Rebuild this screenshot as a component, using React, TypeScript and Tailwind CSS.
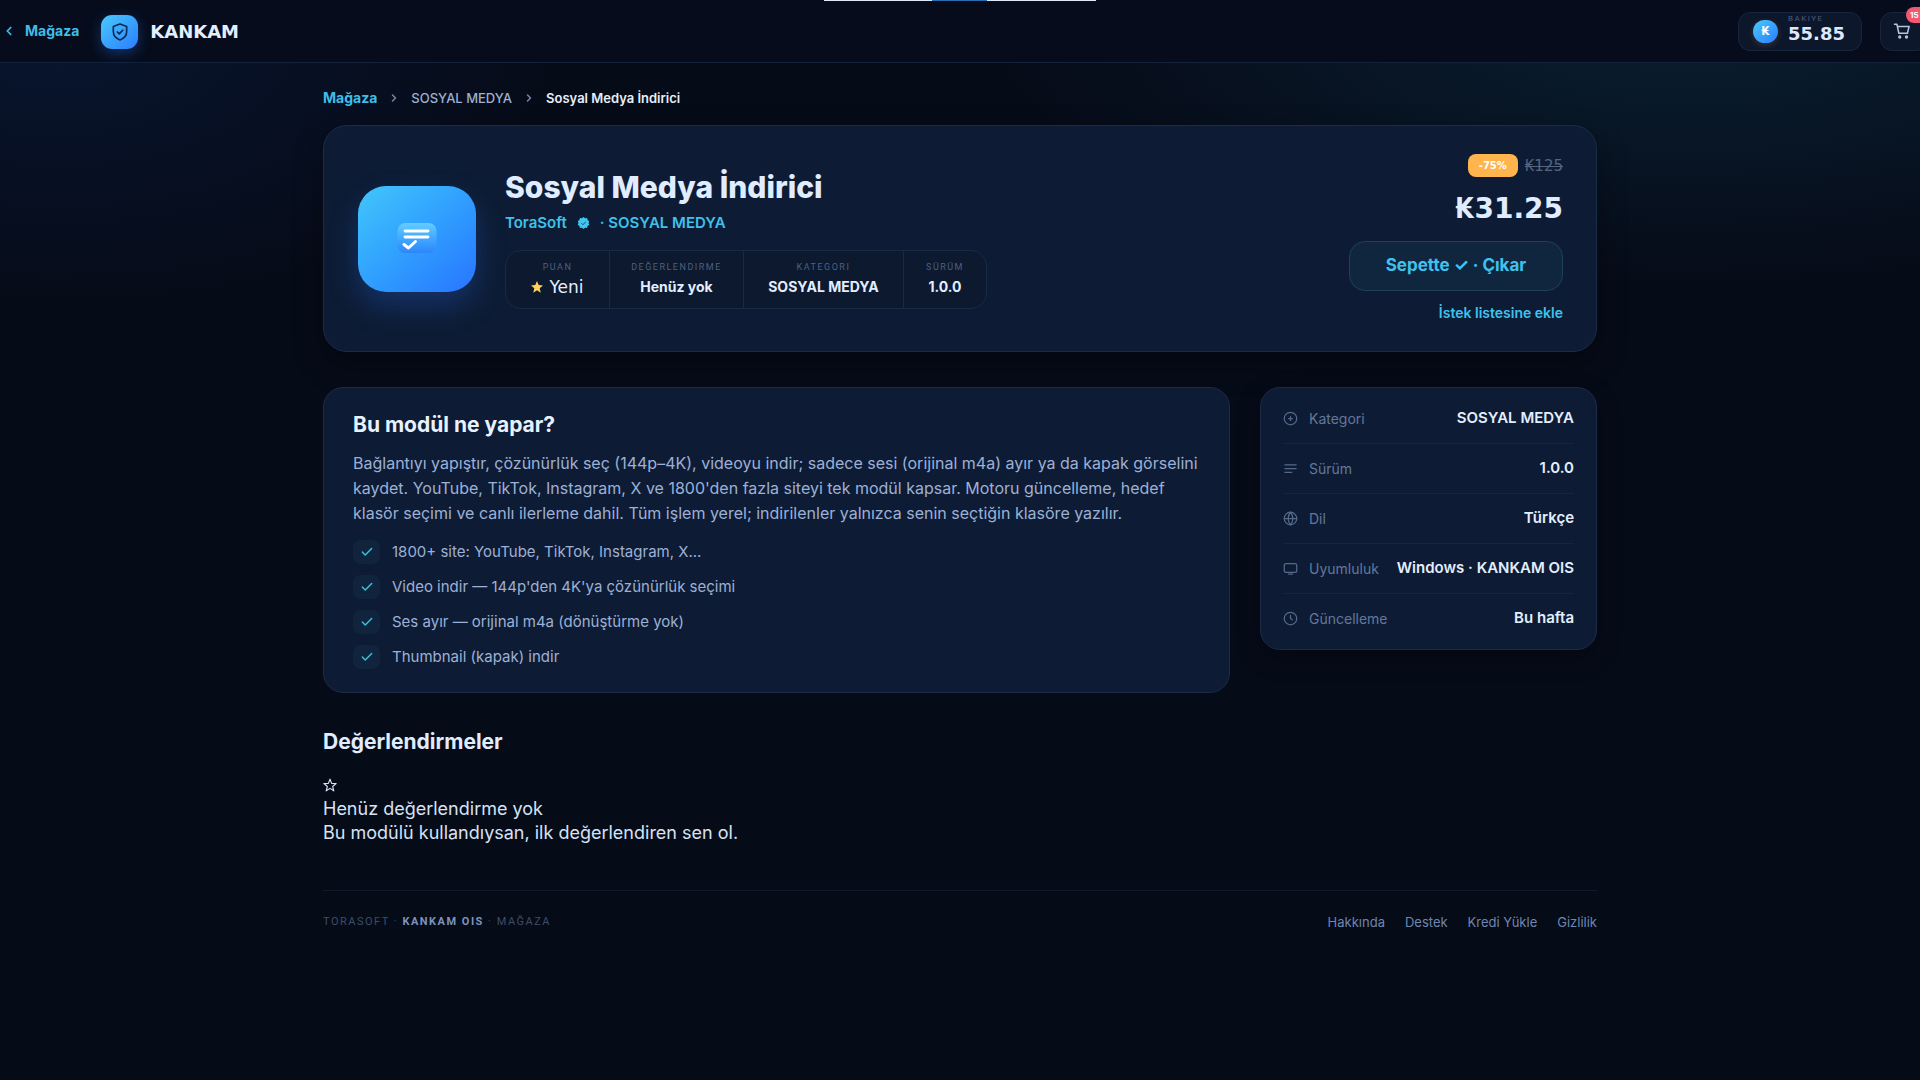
import React from "react";
import { Check, ChevronLeft, ChevronRight } from "lucide-react";

const display = "font-['DejaVu_Sans',sans-serif] font-bold";
const caption = "font-['Roboto',sans-serif] uppercase";

const stroke = {
  fill: "none",
  stroke: "currentColor",
  strokeWidth: 2,
  strokeLinecap: "round" as const,
  strokeLinejoin: "round" as const,
};

function ShieldLogo() {
  return (
    <span className="flex h-[34px] w-[37px] items-center justify-center rounded-[11px] bg-linear-to-br from-[#4cc9fb] to-[#2f7bff] shadow-[0_4px_14px_rgba(47,123,255,0.35)]">
      <svg viewBox="0 0 24 24" className="h-5 w-5 text-[#0b2a55]" {...stroke}>
        <path d="M12 2.5l8 3v6c0 5-3.3 8.400-8 10-4.700-1.600-8-5-8-10v-6z" />
        <path d="M8.800 12l2.300 2.300 4.200-4.400" />
      </svg>
    </span>
  );
}

function Header() {
  return (
    <header className="relative flex h-[63px] items-center justify-between border-b border-[#13213a] bg-[#060c1b]">
      <div className="absolute left-1/2 top-0 flex h-px w-[272px] -translate-x-1/2 bg-[#dfe8f5]">
        <div className="ml-[108px] w-[55px] bg-[#2a6cb0]" />
      </div>
      <div className="flex items-center gap-[22px] pl-0.5">
        <a href="#magaza" className="flex items-center gap-[9px] text-sm font-bold text-[#3fbde8]">
          <ChevronLeft size={14} strokeWidth={3} />
          Mağaza
        </a>
        <a href="#anasayfa" className="flex items-center gap-3 pt-0.5">
          <ShieldLogo />
          <span className={`${display} text-lg leading-6 text-[#e3eeff]`}>KANKAM</span>
        </a>
      </div>
      <div className="-mr-2 flex items-center gap-[18px]">
        <div className="flex h-[39px] w-[124px] items-center gap-2.5 rounded-xl border border-[#17263f] bg-[#0c172b] pl-3.5">
          <span className="flex h-[23px] w-[25px] items-center justify-center rounded-full bg-linear-to-br from-[#4cc9fb] to-[#2f7bff] font-['DejaVu_Sans'] text-xs font-bold text-white shadow-[0_2px_6px_rgba(255,160,70,0.2)]">
            ₭
          </span>
          <span className="flex flex-col pb-1">
            <span className={`${caption} text-[8px] leading-[10px] tracking-[1.5px] text-[#4c5c78]`}>BAKIYE</span>
            <span className={`${display} text-lg leading-5 text-[#dbe8ff]`}>55.85</span>
          </span>
        </div>
        <button
          type="button"
          aria-label="Sepet"
          className="relative flex h-[39px] w-[48px] items-center rounded-xl border border-[#17263f] bg-[#0c172b] pl-[11px] text-[#b7c6de]"
        >
          <svg viewBox="0 0 24 24" className="h-[18px] w-5" {...stroke}>
            <path d="M2 3h3.200l2.600 12h11.400l2.300-9H6" />
            <circle cx="9" cy="20" r="1.200" />
            <circle cx="18" cy="20" r="1.200" />
          </svg>
          <span className="absolute -top-1.5 left-[25px] flex h-4 w-6 items-center rounded-full bg-[#f4586f] pl-1 text-[8px] font-bold text-white">
            15
          </span>
        </button>
      </div>
    </header>
  );
}

function Breadcrumb() {
  return (
    <nav aria-label="Sayfa yolu" className="flex h-[18px] items-center gap-[11px] text-[13px] leading-[18px]">
      <a href="#magaza" className="text-sm font-bold text-[#3fbde8]">
        Mağaza
      </a>
      <ChevronRight size={12} className="text-[#7686a3]" strokeWidth={3} />
      <a href="#sosyal-medya" className="font-medium text-[#9fb1d0]">
        SOSYAL MEDYA
      </a>
      <ChevronRight size={12} className="text-[#7686a3]" strokeWidth={3} />
      <span className="font-semibold text-[#e6effc]">Sosyal Medya İndirici</span>
    </nav>
  );
}

function AppIcon() {
  return (
    <div className="flex h-[106px] w-[118px] shrink-0 items-center justify-center rounded-[28px] bg-linear-to-br from-[#43c6fb] to-[#2a74ff] shadow-[0_14px_30px_rgba(42,116,255,0.25)]">
      <svg viewBox="0 0 40 34" className="h-[34px] w-10" fill="none">
        <defs>
          <linearGradient id="sheet" x1="0" y1="0" x2="0" y2="1">
            <stop offset="0" stopColor="#62cdff" />
            <stop offset="0.600" stopColor="#3fa2ff" />
            <stop offset="1" stopColor="#2d86fb" />
          </linearGradient>
        </defs>
        <rect x="0.500" y="1" width="39" height="30" rx="8" fill="url(#sheet)" />
        <path d="M8 9h23M8 15h23" stroke="#fff" strokeWidth="2.800" strokeLinecap="round" />
        <path d="M7 22.500l4.500 3.500 7-6.500" stroke="#fff" strokeWidth="3" strokeLinecap="round" strokeLinejoin="round" />
      </svg>
    </div>
  );
}

function Stat({ label, width, children }: { label: string; width: string; children: React.ReactNode }) {
  return (
    <div className={`flex flex-col items-center justify-center gap-1 border-l border-[#192a45] first:border-l-0 ${width}`}>
      <dt className={`${caption} text-[9px] leading-3 tracking-[1.5px] text-[#4f6080]`}>{label}</dt>
      <dd className="flex items-center text-sm font-bold leading-5 text-[#e3eeff]">{children}</dd>
    </div>
  );
}

function Hero() {
  return (
    <section className="mt-[18px] flex items-center rounded-3xl border border-[#1a2c47] bg-[#0d1c34] py-[28px] pl-[34px] pr-[33px] shadow-[0_12px_30px_rgba(0,0,0,0.35)]">
      <AppIcon />
      <div className="ml-[29px] flex flex-1 flex-col items-start">
        <h1 className="text-3xl font-extrabold leading-9 text-[#e0ecff]">Sosyal Medya İndirici</h1>
        <p className="mt-2 flex items-center text-[15px] font-semibold leading-5 text-[#3fc1ea]">
          ToraSoft
          <svg viewBox="0 0 24 24" className="mx-2.5 h-3 w-[13px]">
            <path
              fill="#41c4f0"
              d="M12 0l3.200 2.400 4-.2 1 3.900 3.300 2.200L22 12l1.500 3.700-3.300 2.200-1 3.900-4-.2L12 24l-3.200-2.400-4 .2-1-3.900L.5 15.700 2 12 .5 8.300l3.300-2.200 1-3.900 4 .2z"
            />
            <path d="M8 12.500l3 3 5.500-6" fill="none" stroke="#14506f" strokeWidth="2" />
          </svg>
          · SOSYAL MEDYA
        </p>
        <dl className="mt-[17px] flex h-[59px] rounded-2xl border border-[#192a45] bg-[#0c192f]">
          <Stat label="PUAN" width="w-[103px]">
            <svg viewBox="0 0 24 24" className="mr-1.5 h-3 w-3" aria-hidden="true">
              <path fill="#ffd257" d="M12 0l3.400 8.200 8.600.7-6.600 5.700 2.100 8.700L12 18.600l-7.500 4.700 2.100-8.700L0 8.900l8.600-.7z" />
            </svg>
            <span className="font-['DejaVu_Sans'] text-[17px] font-normal">Yeni</span>
          </Stat>
          <Stat label="DEĞERLENDIRME" width="w-[134px]">
            Henüz yok
          </Stat>
          <Stat label="KATEGORI" width="w-[160px]">
            SOSYAL MEDYA
          </Stat>
          <Stat label="SÜRÜM" width="w-[83px]">
            1.0.0
          </Stat>
        </dl>
      </div>
      <div className="flex flex-col items-end">
        <div className="flex items-center gap-[7px]">
          <span className="flex h-[23px] w-[50px] items-center justify-center rounded-lg bg-[#ffb44d] font-['DejaVu_Sans'] text-[10px] font-bold text-white">
            -75%
          </span>
          <s className="font-['DejaVu_Sans'] text-[15px] leading-5 text-[#56647f]">₭125</s>
        </div>
        <p className={`${display} mt-3.5 text-[28px] leading-9 text-[#e0ecff]`}>₭31.25</p>
        <button
          type="button"
          className="mt-3.5 h-[50px] w-[214px] rounded-2xl border border-[#1c4157] bg-[#10263f] text-[17px] font-bold text-[#3fc3ee]"
        >
          Sepette ✓ · Çıkar
        </button>
        <button type="button" className="mt-3 text-sm font-semibold leading-5 text-[#3fc3ee]">
          İstek listesine ekle
        </button>
      </div>
    </section>
  );
}

const features = [
  "1800+ site: YouTube, TikTok, Instagram, X...",
  "Video indir — 144p'den 4K'ya çözünürlük seçimi",
  "Ses ayır — orijinal m4a (dönüştürme yok)",
  "Thumbnail (kapak) indir",
];

function About() {
  return (
    <section className="rounded-[20px] border border-[#1a2c47] bg-[#0d1c34] px-[29px] pb-[23px] pt-[23px]">
      <h2 className="text-[21px] font-bold leading-7 text-[#e8f1ff]">Bu modül ne yapar?</h2>
      <p className="mt-3 text-base leading-[25px] text-[#9db0d6]">
        Bağlantıyı yapıştır, çözünürlük seç (144p–4K), videoyu indir; sadece sesi (orijinal m4a) ayır ya da kapak
        görselini kaydet. YouTube, TikTok, Instagram, X ve 1800'den fazla siteyi tek modül kapsar. Motoru güncelleme,
        hedef klasör seçimi ve canlı ilerleme dahil. Tüm işlem yerel; indirilenler yalnızca senin seçtiğin klasöre
        yazılır.
      </p>
      <ul className="mt-3.5 flex flex-col gap-[11px]">
        {features.map((f) => (
          <li key={f} className="flex h-6 items-center gap-3 text-[15px] text-[#9db0d6]">
            <span className="flex h-6 w-[27px] items-center justify-center rounded-lg bg-[#11243d] text-[#3cc0de]">
              <Check size={14} strokeWidth={2.5} />
            </span>
            {f}
          </li>
        ))}
      </ul>
    </section>
  );
}

const details = [
  {
    label: "Kategori",
    value: "SOSYAL MEDYA",
    icon: (
      <>
        <circle cx="12" cy="12" r="10" />
        <path d="M12 9v6M9 12h6" />
      </>
    ),
  },
  { label: "Sürüm", value: "1.0.0", icon: <path d="M3 6h18M3 12h18M3 18h11" /> },
  {
    label: "Dil",
    value: "Türkçe",
    icon: (
      <>
        <circle cx="12" cy="12" r="10" />
        <path d="M2 12h20M12 2c5 5.500 5 14.500 0 20M12 2c-5 5.500-5 14.500 0 20" />
      </>
    ),
  },
  {
    label: "Uyumluluk",
    value: "Windows · KANKAM OIS",
    icon: (
      <>
        <rect x="2" y="4" width="20" height="14" rx="3" />
        <path d="M9 21h6" />
      </>
    ),
  },
  {
    label: "Güncelleme",
    value: "Bu hafta",
    icon: (
      <>
        <circle cx="12" cy="12" r="10" />
        <path d="M12 7v5l3 2" />
      </>
    ),
  },
];

function Details() {
  return (
    <dl className="rounded-[20px] border border-[#1a2c47] bg-[#0d1c34] px-[22px] py-1.5 shadow-[0_8px_24px_rgba(0,0,0,0.3)]">
      {details.map((d) => (
        <div
          key={d.label}
          className="flex h-[50px] items-center justify-between border-b border-[#14253e] last:h-[49px] last:border-b-0"
        >
          <dt className="flex items-center gap-[11px] text-sm text-[#64779b]">
            <svg viewBox="0 0 24 24" className="h-[15px] w-[15px] text-[#566889]" {...stroke}>
              {d.icon}
            </svg>
            {d.label}
          </dt>
          <dd className="text-[15px] font-semibold text-[#e3eeff]">{d.value}</dd>
        </div>
      ))}
    </dl>
  );
}

function Reviews() {
  return (
    <section className="mt-[35px]">
      <h2 className="text-[21px] font-bold leading-7 text-[#e0ecff]">Değerlendirmeler</h2>
      <div className="mt-[22px] text-lg leading-6 text-[#d6e2f5]">
        <svg viewBox="0 0 24 24" className="my-[5px] h-3.5 w-3.5" {...stroke} aria-hidden="true">
          <path d="M12 2l2.800 7.200 7.700.4-6 4.900 2 7.500L12 17.800 5.500 22l2-7.500-6-4.900 7.700-.4z" />
        </svg>
        <p>Henüz değerlendirme yok</p>
        <p>Bu modülü kullandıysan, ilk değerlendiren sen ol.</p>
      </div>
    </section>
  );
}

function Footer() {
  return (
    <footer className="mt-[45px] flex items-center justify-between border-t border-[#101a2c] pt-[21px]">
      <p className={`${caption} text-[11px] leading-5 tracking-[1.5px] text-[#3d4d68]`}>
        TORASOFT · <b className="text-[#7c93bd]">KANKAM OIS</b> · MAĞAZA
      </p>
      <nav aria-label="Alt bağlantılar" className="flex gap-5 text-[13px] leading-5 text-[#6f86b0]">
        <a href="#hakkinda">Hakkında</a>
        <a href="#destek">Destek</a>
        <a href="#kredi">Kredi Yükle</a>
        <a href="#gizlilik">Gizlilik</a>
      </nav>
    </footer>
  );
}

export default function App() {
  return (
    <div className="min-h-screen overflow-x-hidden bg-[#060b18] bg-[radial-gradient(ellipse_700px_260px_at_88%_2%,#0a1f30,transparent),radial-gradient(ellipse_500px_260px_at_3%_4%,#08152e,transparent)] font-['Inter',sans-serif]">
      <Header />
      <main className="mx-auto w-full max-w-[1274px] pt-[26px]">
        <Breadcrumb />
        <Hero />
        <div className="mt-[35px] grid grid-cols-[minmax(0,1fr)_337px] items-start gap-[30px]">
          <About />
          <Details />
        </div>
        <Reviews />
        <Footer />
      </main>
    </div>
  );
}
